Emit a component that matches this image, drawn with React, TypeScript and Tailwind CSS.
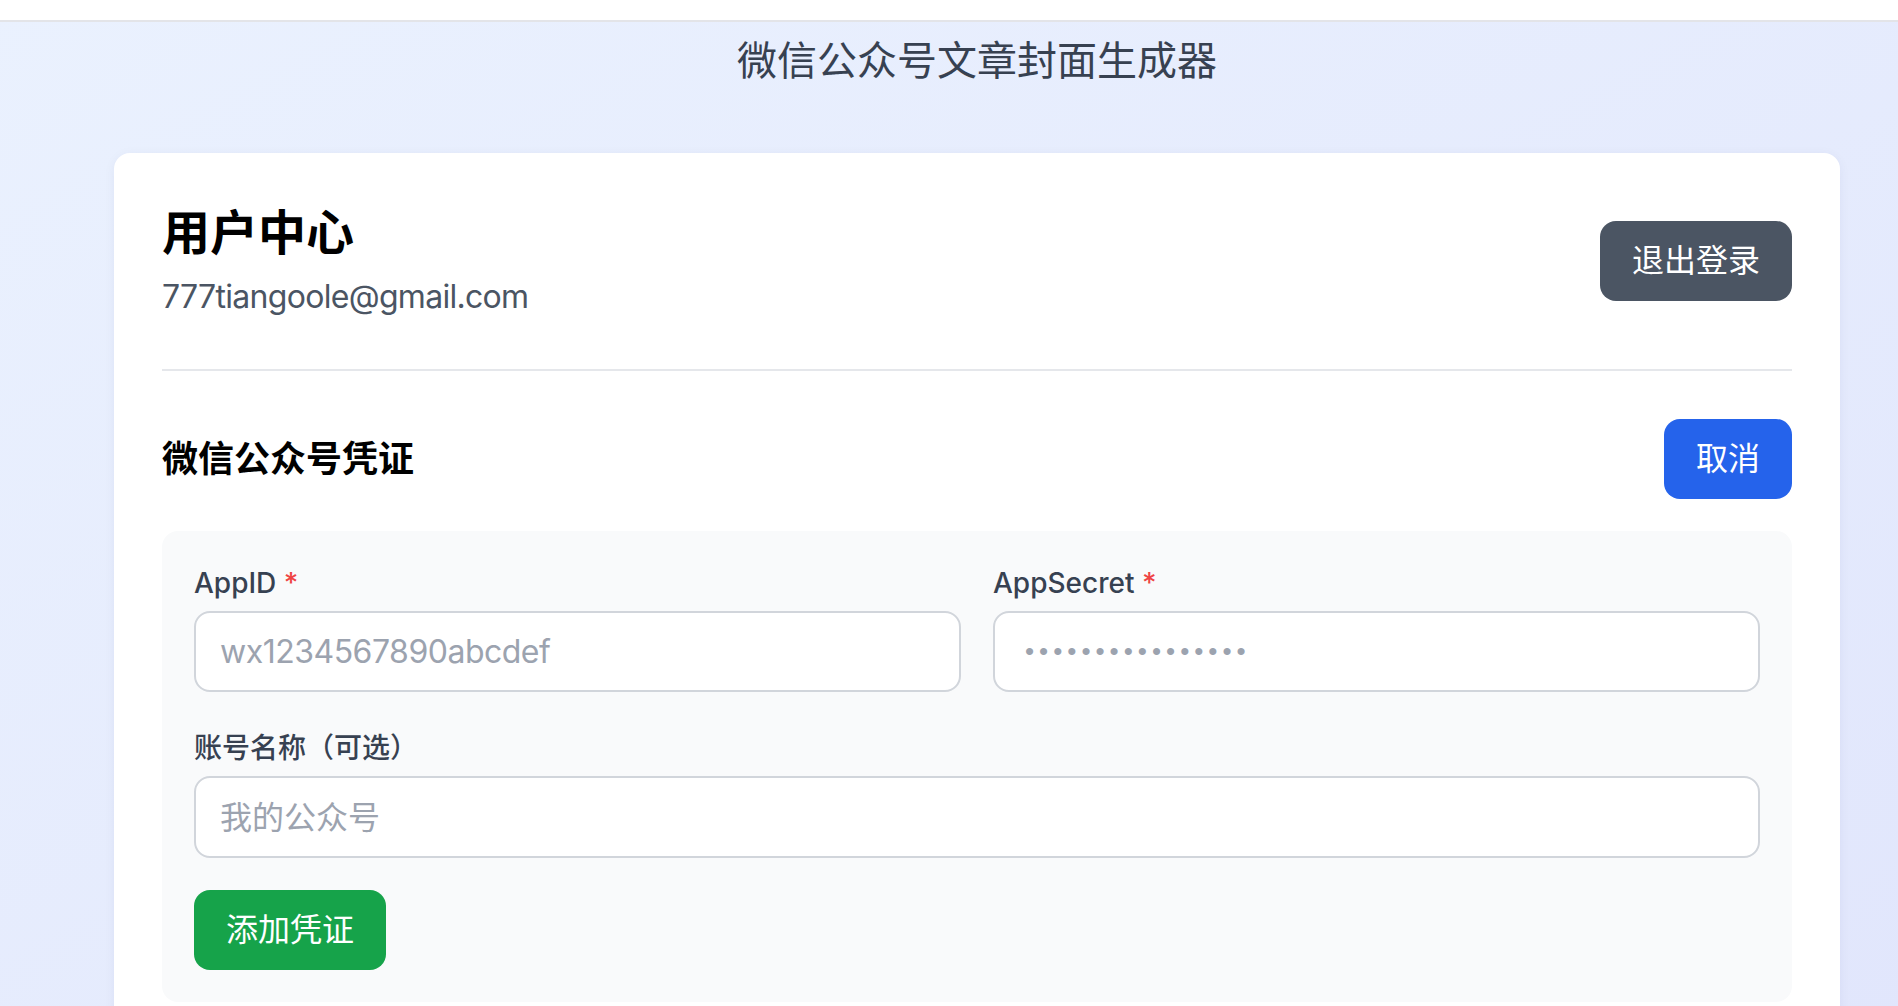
export default function App() {
  return (
    <div className="min-h-screen bg-linear-to-br from-[#eaf1fe] to-[#e1e6fc] font-['Inter','Noto_Sans_CJK_SC',sans-serif]">
      {/* top bar */}
      <div className="h-[22px] bg-white border-b-2 border-[#e3e4e8]" />

      <div className="ml-[114px] w-[1726px] pt-[11px]">
        <h1 className="text-center text-[40px] leading-[56px] text-[#374151] mb-16">微信公众号文章封面生成器</h1>

        <div className="bg-white rounded-2xl shadow-[0_2px_12px_rgba(30,40,90,0.05)] p-12">
          {/* user header */}
          <div className="flex items-center justify-between pb-12 border-b-2 border-[#e5e7eb]">
            <div>
              <h2 className="text-[48px] leading-[64px] font-bold text-black">用户中心</h2>
              <p className="mt-2 text-[32px] leading-[48px] tracking-[-0.7px] text-[#4b5563]">777tiangoole@gmail.com</p>
            </div>
            <button className="bg-[#4b5563] text-white text-[32px] leading-[48px] px-8 py-4 rounded-2xl">退出登录</button>
          </div>

          {/* credentials */}
          <div className="mt-12">
            <div className="flex items-center justify-between mb-8">
              <h3 className="text-[36px] leading-[56px] font-bold text-black">微信公众号凭证</h3>
              <button className="bg-[#2563eb] text-white text-[32px] leading-[48px] px-8 py-4 rounded-2xl">取消</button>
            </div>

            <div className="bg-[#f9fafb] rounded-2xl p-8">
              <div className="grid grid-cols-2 gap-8">
                <div>
                  <label className="block mb-2 text-[28px] leading-[40px] font-medium text-[#374151]">
                    AppID <span className="text-[#ef4444]">*</span>
                  </label>
                  <input
                    className="w-full h-[81px] px-6 bg-white border-2 border-[#d1d5db] rounded-2xl text-[32px] tracking-[-0.5px] placeholder:text-[#9ca3af] outline-none"
                    placeholder="wx1234567890abcdef"
                  />
                </div>
                <div>
                  <label className="block mb-2 text-[28px] leading-[40px] font-medium text-[#374151]">
                    AppSecret <span className="text-[#ef4444]">*</span>
                  </label>
                  <input
                    type="password"
                    className="w-full h-[81px] pl-[30px] pr-6 bg-white border-2 border-[#d1d5db] rounded-2xl font-['Liberation_Sans',sans-serif] text-[26px] tracking-[5px] placeholder:text-[#9ca3af] outline-none"
                    placeholder="••••••••••••••••"
                  />
                </div>
              </div>

              <div className="mt-[36px]">
                <label className="block mb-2 text-[28px] leading-[40px] font-medium text-[#374151]">账号名称（可选）</label>
                <input
                  className="w-full h-[82px] px-6 bg-white border-2 border-[#d1d5db] rounded-2xl text-[32px] placeholder:text-[#9ca3af] outline-none"
                  placeholder="我的公众号"
                />
              </div>

              <button className="mt-8 bg-[#16a34a] text-white text-[32px] leading-[48px] px-8 py-4 rounded-2xl">添加凭证</button>
            </div>
          </div>
        </div>
      </div>
    </div>
  );
}
